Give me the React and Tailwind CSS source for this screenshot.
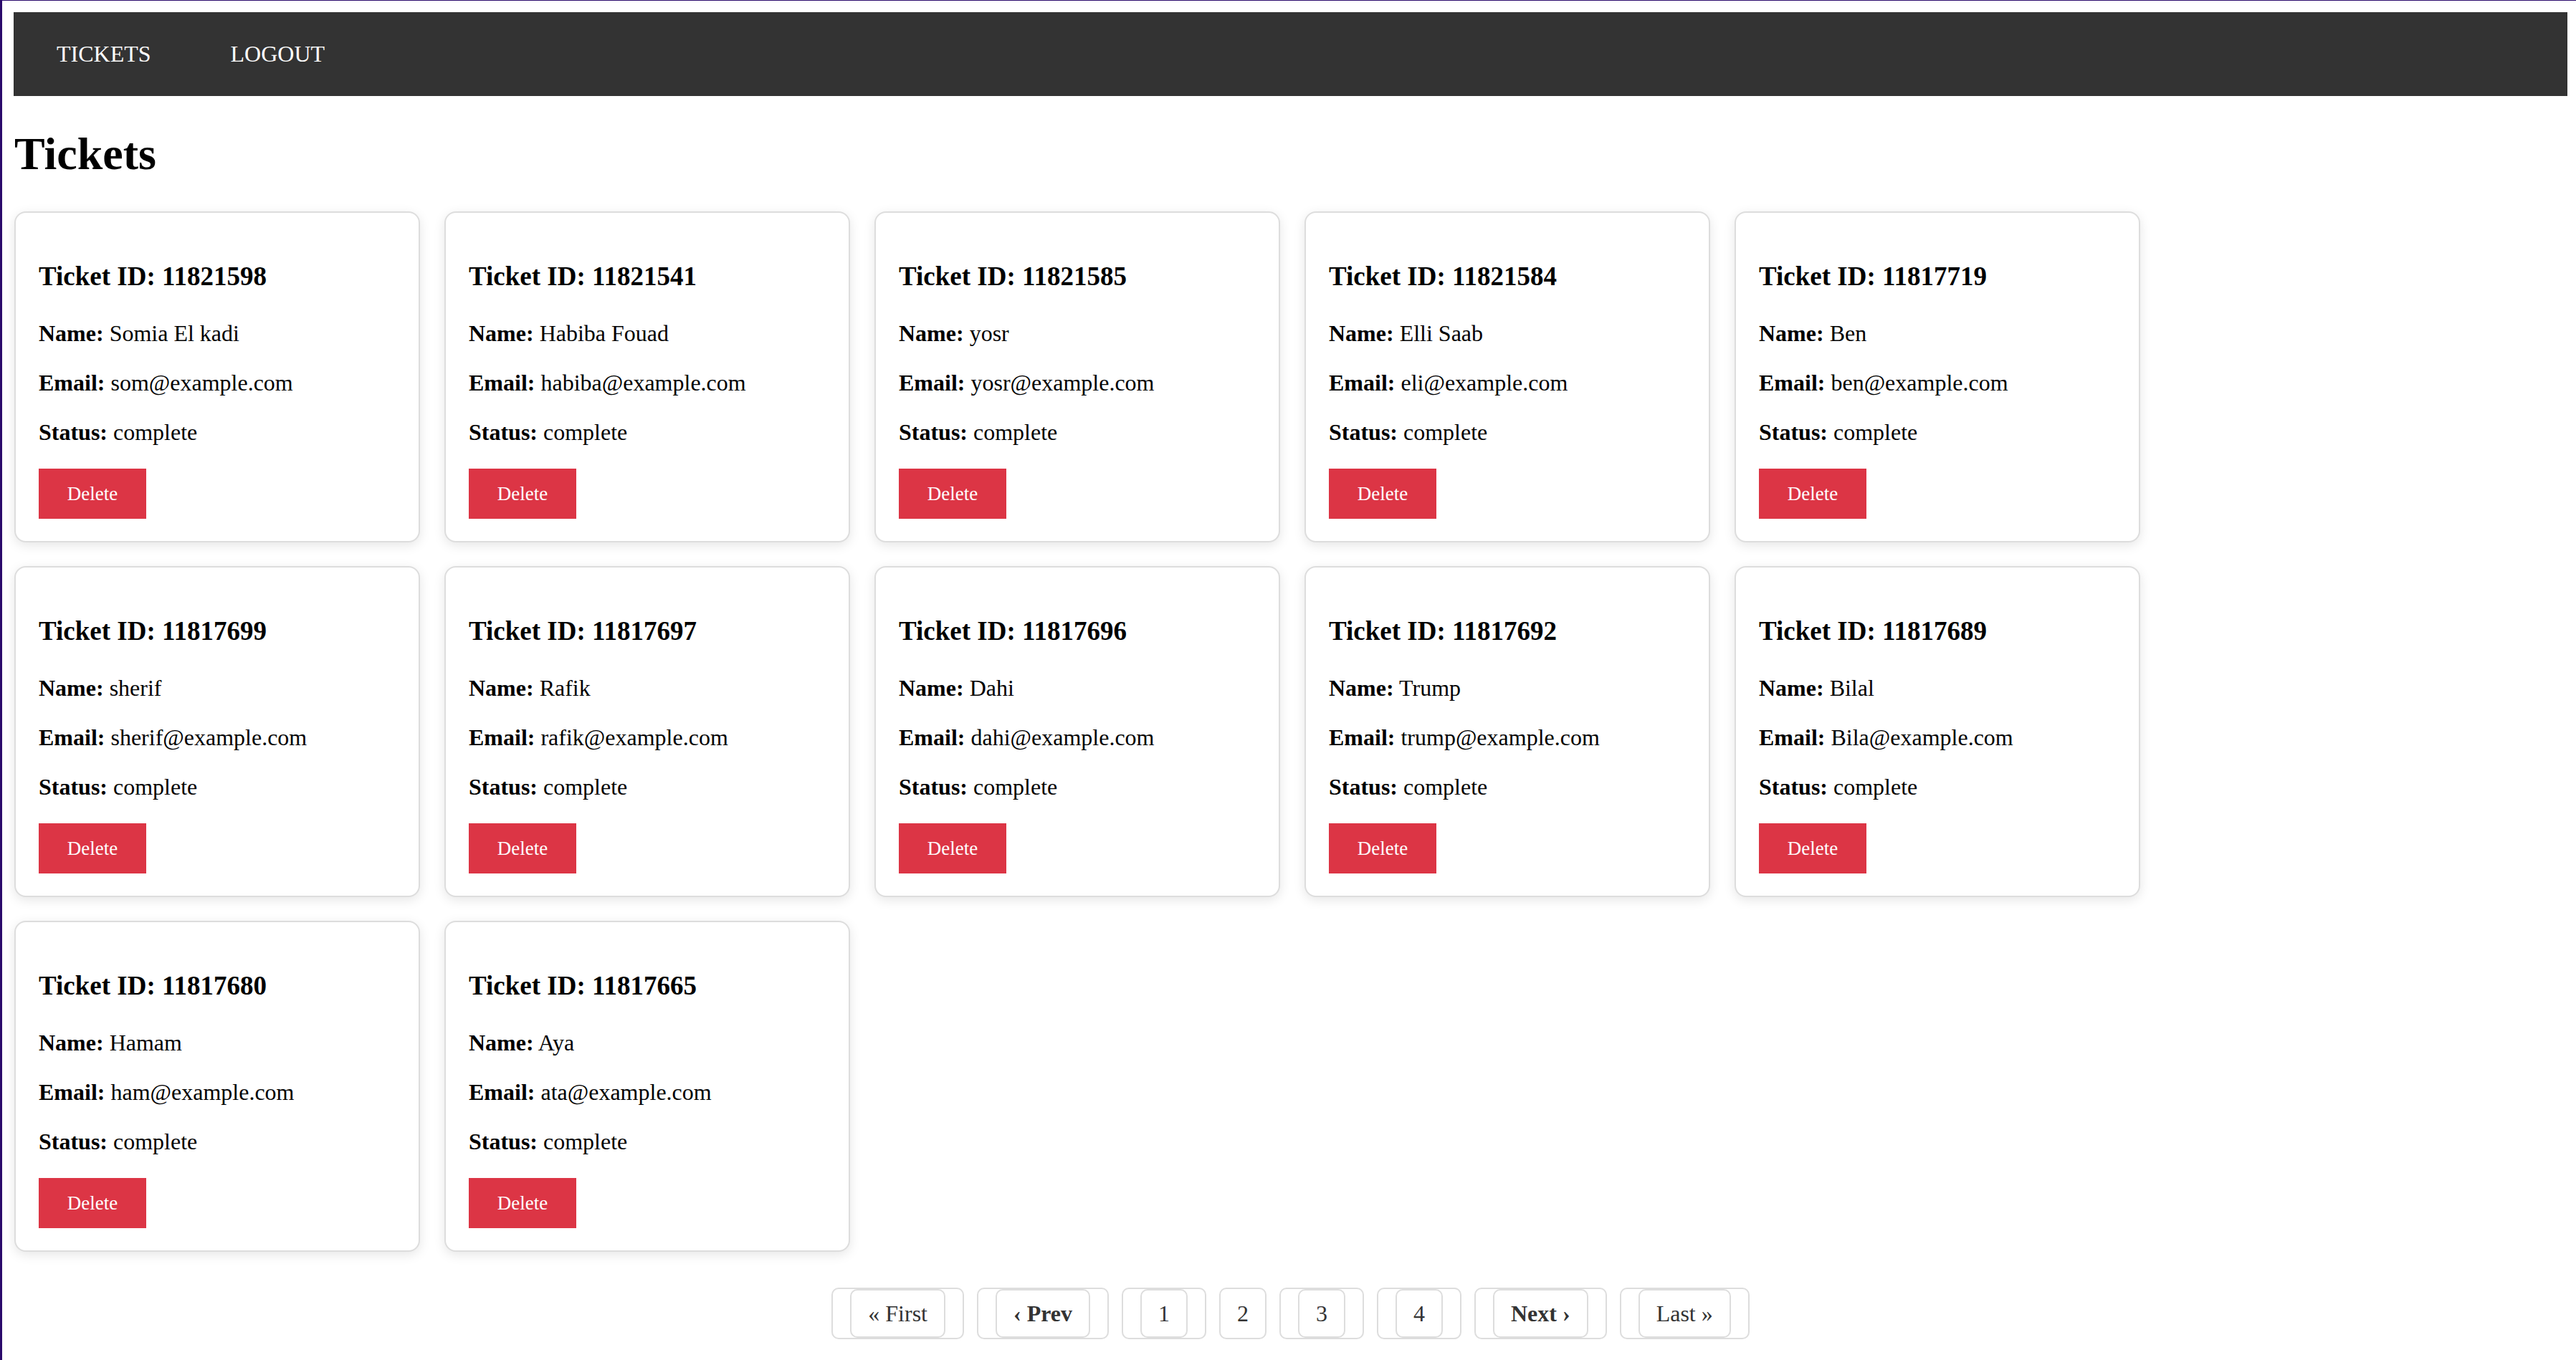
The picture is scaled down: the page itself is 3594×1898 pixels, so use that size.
import React from 'react'

const tickets = [
  { id: 11821598, name: 'Somia El kadi', email: 'som@example.com' },
  { id: 11821541, name: 'Habiba Fouad', email: 'habiba@example.com' },
  { id: 11821585, name: 'yosr', email: 'yosr@example.com' },
  { id: 11821584, name: 'Elli Saab', email: 'eli@example.com' },
  { id: 11817719, name: 'Ben', email: 'ben@example.com' },
  { id: 11817699, name: 'sherif', email: 'sherif@example.com' },
  { id: 11817697, name: 'Rafik', email: 'rafik@example.com' },
  { id: 11817696, name: 'Dahi', email: 'dahi@example.com' },
  { id: 11817692, name: 'Trump', email: 'trump@example.com' },
  { id: 11817689, name: 'Bilal', email: 'Bila@example.com' },
  { id: 11817680, name: 'Hamam', email: 'ham@example.com' },
  { id: 11817665, name: 'Aya', email: 'ata@example.com' },
]

const pages = [
  { label: '« First' },
  { label: '‹ Prev', bold: true },
  { label: '1' },
  { label: '2', single: true },
  { label: '3' },
  { label: '4' },
  { label: 'Next ›', bold: true },
  { label: 'Last »' },
]

function TicketCard({ ticket }) {
  return (
    <div className="w-[566px] h-[462px] bg-white border-2 border-[#dddddd] rounded-[16px] shadow-[0_4px_16px_rgba(0,0,0,0.1)] px-[32px] pt-[68px]">
      <h3 className="text-[37px] leading-[42px] font-bold">Ticket ID: {ticket.id}</h3>
      <p className="mt-[40px] text-[32px] leading-[37px]">
        <strong>Name:</strong> {ticket.name}
      </p>
      <p className="mt-[32px] text-[32px] leading-[37px]">
        <strong>Email:</strong> {ticket.email}
      </p>
      <p className="mt-[32px] text-[32px] leading-[37px]">
        <strong>Status:</strong> complete
      </p>
      <button className="mt-[32px] w-[150px] h-[70px] bg-[#dc3545] text-white text-[27px] leading-[30px]">
        Delete
      </button>
    </div>
  )
}

function PageItem({ page }) {
  const text = page.bold ? 'font-bold' : ''
  if (page.single) {
    return (
      <div className={`h-[72px] border-2 border-[#dddddd] rounded-[10px] px-[23px] flex items-center text-[32px] text-[#333333] ${text}`}>
        {page.label}
      </div>
    )
  }
  return (
    <div className="h-[72px] border-2 border-[#dddddd] rounded-[10px] px-[24px] flex items-center">
      <span className={`h-[68px] border-2 border-[#dddddd] rounded-[10px] px-[23px] flex items-center text-[32px] text-[#333333] ${text}`}>
        {page.label}
      </span>
    </div>
  )
}

export default function App() {
  return (
    <div className="min-h-screen bg-white border-l-[3px] border-t border-[#2a0a6b] pl-[16px] pr-[12px] pt-[16px] pb-[24px] font-['Liberation_Serif',serif] text-black">
      {/* Navbar */}
      <nav className="h-[117px] bg-[#333333] flex items-center pl-[60px] pb-[2px] gap-[111px] text-white text-[32px]">
        <a href="#">TICKETS</a>
        <a href="#">LOGOUT</a>
      </nav>

      <h1 className="mt-[44px] pl-[1px] text-[64px] leading-[74px] font-bold">Tickets</h1>

      {/* Ticket cards */}
      <div className="mt-[43px] pl-[1px] flex flex-wrap gap-x-[34px] gap-y-[33px]">
        {tickets.map((ticket) => (
          <TicketCard key={ticket.id} ticket={ticket} />
        ))}
      </div>

      {/* Pagination */}
      <div className="mt-[50px] flex justify-center gap-[18px]">
        {pages.map((page) => (
          <PageItem key={page.label} page={page} />
        ))}
      </div>
    </div>
  )
}
